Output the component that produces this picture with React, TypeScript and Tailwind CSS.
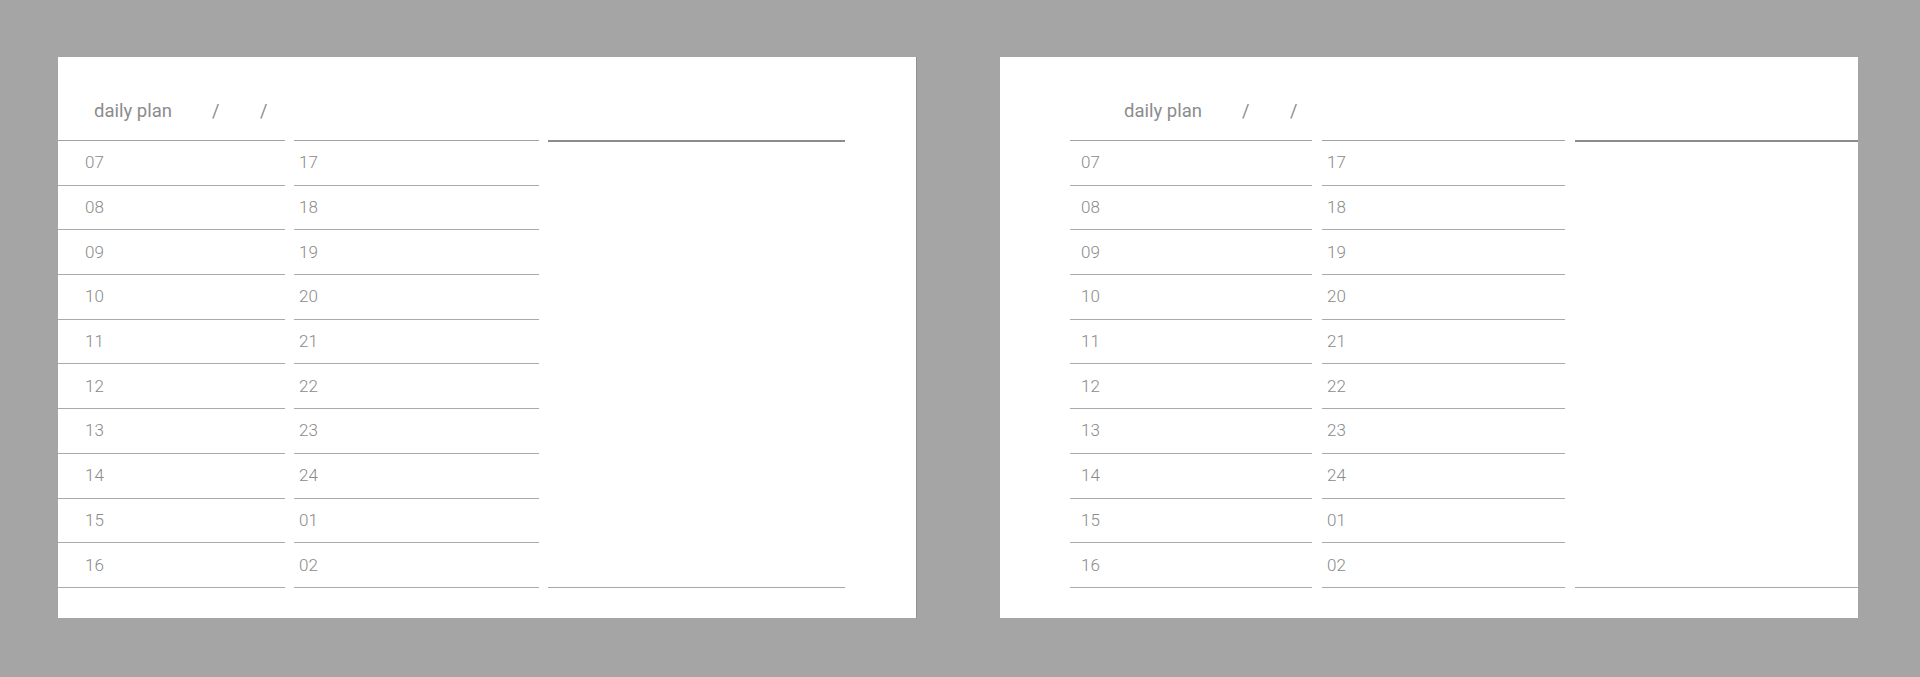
import React from "react";

const left1 = ["07", "08", "09", "10", "11", "12", "13", "14", "15", "16"];
const left2 = ["17", "18", "19", "20", "21", "22", "23", "24", "01", "02"];

function HourCol({ hours, className, pad }: { hours: string[]; className: string; pad: string }) {
  return (
    <div className={`flex flex-col border-t border-[#a3a3a3] shrink-0 ${className}`}>
      {hours.map((h) => (
        <div key={h} className={`h-[44.7px] flex items-center border-b border-[#aaaaaa] ${pad}`}>
          <span className="text-[17px] font-light text-[#8a8a8a] leading-none" style={{ fontFamily: "Roboto, 'Noto Sans', sans-serif" }}>
            {h}
          </span>
        </div>
      ))}
    </div>
  );
}

function Header({ offset }: { offset: string }) {
  return (
    <div className={`h-[83px] flex items-start pt-[42px] ${offset}`}>
      <span
        className="text-[18.5px] text-[#8c8c8c] leading-[24px] w-[118px]"
        style={{ fontFamily: "Roboto, 'Noto Sans', sans-serif" }}
      >
        daily plan
      </span>
      <span className="text-[18px] text-[#8c8c8c] leading-[24px] w-[48px]" style={{ fontFamily: "Roboto, sans-serif" }}>
        /
      </span>
      <span className="text-[18px] text-[#8c8c8c] leading-[24px]" style={{ fontFamily: "Roboto, sans-serif" }}>
        /
      </span>
    </div>
  );
}

export default function App() {
  return (
    <div className="w-[1920px] h-[677px] bg-[#a5a5a5] flex pl-[58px] pt-[57px] gap-[83px] overflow-hidden">
      {/* left page */}
      <div className="w-[859px] h-[561px] bg-white overflow-hidden flex flex-col border-r border-[#8f8f8f] shrink-0">
        <Header offset="pl-[36px]" />
        <div className="flex">
          <HourCol hours={left1} className="w-[227px]" pad="pl-[27px]" />
          <HourCol hours={left2} className="w-[245px] ml-[9px]" pad="pl-[5px]" />
          <div className="w-[297px] ml-[9px] h-[448px] border-t-2 border-b border-t-[#8c8c8c] border-b-[#a8a8a8] shrink-0 mt-[-0.5px]" />
        </div>
      </div>
      {/* right page */}
      <div className="w-[858px] h-[561px] bg-white overflow-hidden flex flex-col shrink-0">
        <Header offset="pl-[124px]" />
        <div className="flex">
          <HourCol hours={left1} className="w-[242px] ml-[70px]" pad="pl-[11px]" />
          <HourCol hours={left2} className="w-[243px] ml-[10px]" pad="pl-[5px]" />
          <div className="flex-1 ml-[10px] h-[448px] border-t-2 border-b border-t-[#8c8c8c] border-b-[#a8a8a8] mt-[-0.5px]" />
        </div>
      </div>
    </div>
  );
}
